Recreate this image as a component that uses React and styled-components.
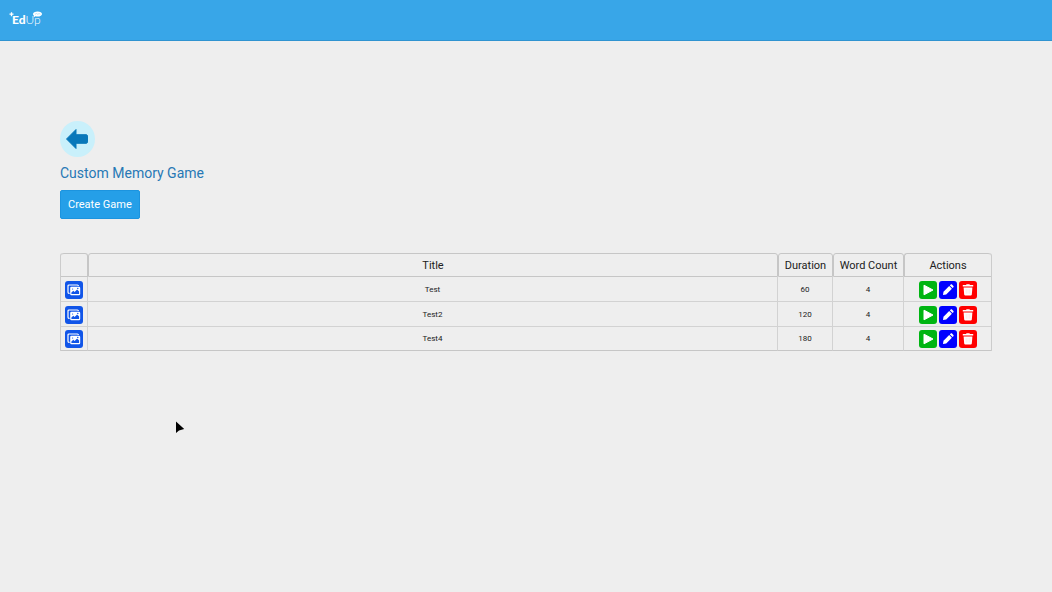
import React from "react";
import styled, { createGlobalStyle } from "styled-components";

const GlobalStyle = createGlobalStyle`
  * {
    box-sizing: border-box;
  }

  body {
    margin: 0;
    background-color: #eeeeee;
    font-family: Roboto, "Liberation Sans", sans-serif;
    color: #212121;
  }
`;

const Header = styled.header`
  display: flex;
  align-items: center;
  height: 41px;
  padding: 0 9px;
  background-color: #38a6e8;
  border-bottom: 1px solid #2f93d0;
`;

const LogoLink = styled.a`
  position: relative;
  display: block;
  padding: 0 3px;
  color: white;
  font-family: Lato, "Open Sans", sans-serif;
  font-size: 12px;
  line-height: 16px;
  text-decoration: none;
`;

const LogoBold = styled.span`
  font-weight: 900;
`;

const LogoLight = styled.span`
  font-weight: 300;
`;

const LogoMarks = styled.svg`
  position: absolute;
  left: 0;
  top: -1px;
  width: 34px;
  height: 12px;
`;

const Main = styled.main`
  padding: 80px 60px 0;
`;

const BackButton = styled.button`
  display: flex;
  align-items: center;
  justify-content: center;
  width: 35px;
  height: 36px;
  padding: 0;
  border: none;
  border-radius: 50%;
  background-color: #c9f0fb;
  cursor: pointer;

  svg {
    width: 25px;
    height: 24px;
  }
`;

const PageTitle = styled.h1`
  margin: 6px 0 7px;
  color: #2778b5;
  font-size: 14px;
  font-weight: 400;
  line-height: 20px;
`;

const CreateButton = styled.button`
  display: block;
  height: 29px;
  padding: 0 7px;
  border: 1px solid #1c94df;
  border-radius: 2px;
  background-color: #259fe8;
  color: white;
  font-family: inherit;
  font-size: 11px;
  cursor: pointer;
`;

const GameTable = styled.table`
  width: 100%;
  margin-top: 34px;
  border-collapse: separate;
  border-spacing: 0;
  table-layout: fixed;
  border-right: 1px solid #cccccc;
  border-left: 1px solid #cccccc;
  border-radius: 3px 3px 0 0;
`;

const Column = styled.col`
  width: ${(props) => props.$width || "auto"};
`;

const HeadCell = styled.th`
  height: 24px;
  padding: 2px 0 0;
  border: 1px solid #c6c6c6;
  border-radius: 3px 3px 0 0;
  font-size: 11px;
  font-weight: 400;
  line-height: 16px;

  &:first-child {
    border-left: none;
  }

  &:last-child {
    border-right: none;
  }
`;

const Cell = styled.td`
  height: 25px;
  padding: 1px 0 0;
  border-right: 1px solid #d2d2d2;
  border-bottom: 1px solid #d2d2d2;
  font-size: 8px;
  line-height: 12px;
  text-align: center;

  &:last-child {
    border-right: none;
  }

  tr:last-child > & {
    height: 24px;
    border-bottom-color: #c6c6c6;
  }
`;

const Actions = styled.div`
  display: flex;
  justify-content: center;
  gap: 2px;
`;

const IconButton = styled.button`
  display: flex;
  align-items: center;
  justify-content: center;
  width: 18px;
  height: 18px;
  padding: 0;
  border: none;
  border-radius: 3px;
  background-color: ${(props) => props.$color};
  cursor: pointer;

  svg {
    width: 14px;
    height: 14px;
  }
`;

const Pointer = styled.svg`
  position: fixed;
  left: 175px;
  top: 421px;
  width: 10px;
  height: 13px;
  pointer-events: none;
`;

const ImagesIcon = () => (
  <svg viewBox="0 0 14 14" aria-hidden="true">
    <path d="M2.6 10.3H2c-.6 0-1-.4-1-1V3c0-.6.4-1 1-1h8.4c.6 0 1 .4 1 1" fill="none" stroke="white" strokeWidth="1.2" />
    <rect x="3.2" y="3.8" width="10" height="8.4" rx="1.2" fill="white" />
    <path d="M4.4 11V9.6l1.9-1.9 1.3 1.2 2.5-2.5 2 2V11z" fill="#1155e8" />
    <circle cx="10.8" cy="5.4" r="0.7" fill="#1155e8" />
    <circle cx="5.6" cy="6" r="0.6" fill="#1155e8" />
  </svg>
);

const PlayIcon = () => (
  <svg viewBox="0 0 14 14" aria-hidden="true">
    <path d="M3 2.2v9.6L12 7z" fill="white" stroke="white" strokeWidth="1" strokeLinejoin="round" />
  </svg>
);

const EditIcon = () => (
  <svg viewBox="0 0 14 14" aria-hidden="true">
    <path d="M2 12l.5-3.2 5.7-5.7 2.7 2.7-5.7 5.7z" fill="white" />
    <path d="M8.9 2.4l.8-.8c.4-.4.9-.4 1.3 0l1.4 1.4c.4.4.4.9 0 1.3l-.8.8z" fill="white" />
  </svg>
);

const TrashIcon = () => (
  <svg viewBox="0 0 14 14" aria-hidden="true">
    <path d="M1.8 2h3.2l.6-.8h2.8l.6.8h3.2v1.5H1.8z" fill="white" />
    <path d="M2.6 4.4h8.8l-.6 7.2c-.1.7-.5 1-1.1 1H4.3c-.6 0-1-.3-1.1-1z" fill="white" />
    <path d="M5.2 6v4.8M7 6v4.8M8.8 6v4.8" stroke="#ffc4c4" strokeWidth="0.4" />
  </svg>
);

const games = [
  { title: "Test", duration: 60, wordCount: 4 },
  { title: "Test2", duration: 120, wordCount: 4 },
  { title: "Test4", duration: 180, wordCount: 4 },
];

const GameRow = ({ game }) => (
  <tr>
    <Cell>
      <Actions>
        <IconButton type="button" $color="#1155e8" aria-label={`Images of ${game.title}`}>
          <ImagesIcon />
        </IconButton>
      </Actions>
    </Cell>
    <Cell>{game.title}</Cell>
    <Cell>{game.duration}</Cell>
    <Cell>{game.wordCount}</Cell>
    <Cell>
      <Actions>
        <IconButton type="button" $color="#00b512" aria-label={`Play ${game.title}`}>
          <PlayIcon />
        </IconButton>
        <IconButton type="button" $color="#0000ff" aria-label={`Edit ${game.title}`}>
          <EditIcon />
        </IconButton>
        <IconButton type="button" $color="#ff0000" aria-label={`Delete ${game.title}`}>
          <TrashIcon />
        </IconButton>
      </Actions>
    </Cell>
  </tr>
);

const App = () => {
  return (
    <>
      <GlobalStyle />
      <Header>
        <LogoLink href="#">
          <LogoBold>Ed</LogoBold>
          <LogoLight>Up</LogoLight>
          <LogoMarks viewBox="0 0 34 12" aria-hidden="true">
            <path d="M2.5 1.2v4M0.5 3.2h4" stroke="white" strokeWidth="1.3" />
            <path d="M24 3.2c0-1.6 2-2.6 4.6-2.6s4.4.9 4.4 2.4-1.8 2.6-4.4 2.6c-.8 0-1.5-.1-2.1-.3l-1.7.9.2-1.5c-.6-.4-1-.9-1-1.5z" fill="white" />
            <path d="M26 3.3l1.5-.8 1.3.8 1.3-.8 1.3.8" fill="none" stroke="#8fd0f5" strokeWidth="0.6" />
          </LogoMarks>
        </LogoLink>
      </Header>
      <Main>
        <BackButton type="button" aria-label="Back">
          <svg viewBox="0 0 25 24" aria-hidden="true">
            <path
              d="M1.5 12L11 2.5v5.2h10c1 0 1.5.5 1.5 1.4v5.8c0 .9-.5 1.4-1.5 1.4H11v5.2z"
              fill="#0878ba"
              stroke="#0878ba"
              strokeWidth="1"
              strokeLinejoin="round"
            />
          </svg>
        </BackButton>
        <PageTitle>Custom Memory Game</PageTitle>
        <CreateButton type="button">Create Game</CreateButton>
        <GameTable>
          <colgroup>
            <Column $width="27px" />
            <Column />
            <Column $width="55px" />
            <Column $width="71px" />
            <Column $width="87px" />
          </colgroup>
          <thead>
            <tr>
              <HeadCell aria-label="Images" />
              <HeadCell>Title</HeadCell>
              <HeadCell>Duration</HeadCell>
              <HeadCell>Word Count</HeadCell>
              <HeadCell>Actions</HeadCell>
            </tr>
          </thead>
          <tbody>
            {games.map((game) => (
              <GameRow key={game.title} game={game} />
            ))}
          </tbody>
        </GameTable>
      </Main>
      <Pointer viewBox="0 0 10 13" aria-hidden="true">
        <path d="M1 0.5v11.5l3-2.5 5.2-1.5z" fill="black" />
      </Pointer>
    </>
  );
};

export default App;
